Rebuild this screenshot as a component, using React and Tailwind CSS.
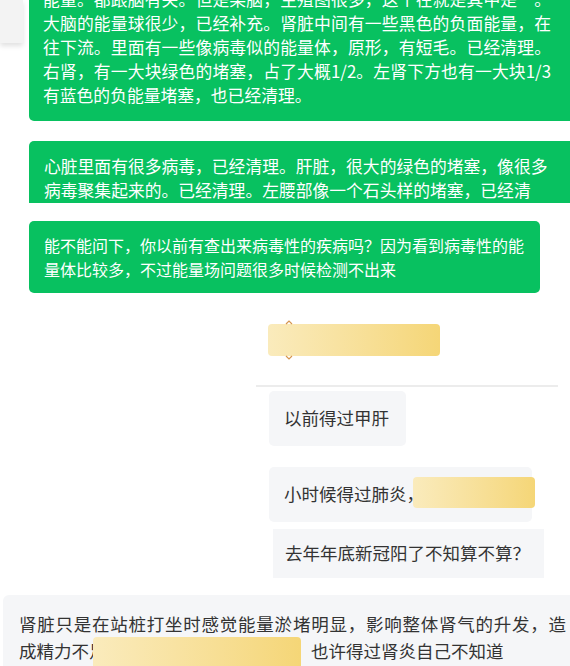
import React from "react";

const Redact = ({ className = "" }) => (
  <div
    className={`rounded-[4px] bg-gradient-to-r from-[#faebbc] to-[#f5d677] ${className}`}
  />
);

const Caret = ({ down = false }) => (
  <svg width="8" height="5" viewBox="0 0 8 5" className="block">
    {down ? (
      <path d="M1 1 L4 4 L7 1" fill="none" stroke="#d6954f" strokeWidth="1.2" />
    ) : (
      <path d="M1 4 L4 1 L7 4" fill="none" stroke="#d6954f" strokeWidth="1.2" />
    )}
  </svg>
);

export default function App() {
  const jLine = "w-[508px] whitespace-nowrap [text-align-last:justify]";

  return (
    <div
      className="relative w-[570px] h-[666px] overflow-hidden bg-white"
      style={{ fontFamily: '"Noto Sans CJK SC", "Noto Sans", sans-serif' }}
    >
      {/* first green message, scrolled off the top */}
      <div className="flex items-start">
        <div className="w-[23px] h-[43px] shrink-0 bg-[#f3f3f3] shadow-[0_3px_5px_rgba(0,0,0,0.12)]" />
        <div className="ml-[6px] w-[580px] h-[121px] shrink-0 rounded-bl-[5px] bg-[#08c160] pl-[14px] text-white text-[16.8px] leading-[24px] overflow-hidden">
          <div className="-mt-[13px]">
            <div className={jLine}>能量。都跟脑有关。但是某脑，生殖图很多，这个在就是其中是一。</div>
            <div className={jLine}>大脑的能量球很少，已经补充。肾脏中间有一些黑色的负面能量，在</div>
            <div className={jLine}>往下流。里面有一些像病毒似的能量体，原形，有短毛。已经清理。</div>
            <div className={jLine}>右肾，有一大块绿色的堵塞，占了大概1/2。左肾下方也有一大块1/3</div>
            <div className="whitespace-nowrap">有蓝色的负能量堵塞，也已经清理。</div>
          </div>
        </div>
      </div>

      {/* second green message, cut at the bottom */}
      <div className="mt-[20px] ml-[29px] w-[580px] h-[62px] overflow-hidden rounded-t-[5px] bg-[#08c160] pl-[15px] pt-[13px] text-white text-[16.8px] leading-[24px]">
        <div className="whitespace-nowrap">心脏里面有很多病毒，已经清理。肝脏，很大的绿色的堵塞，像很多</div>
        <div className="whitespace-nowrap">病毒聚集起来的。已经清理。左腰部像一个石头样的堵塞，已经清</div>
      </div>

      {/* question */}
      <div className="mt-[18px] ml-[29px] w-[511px] rounded-[5px] bg-[#08c160] px-[15px] py-[12px] text-white text-[16px] leading-[24px]">
        能不能问下，你以前有查出来病毒性的疾病吗？因为看到病毒性的能量体比较多，不过能量场问题很多时候检测不出来
      </div>

      {/* redacted name */}
      <div className="relative mt-[31px] ml-[268px] w-[172px]">
        <Redact className="h-[32px]" />
        <div className="absolute left-[17px] -top-[4px]">
          <Caret />
        </div>
        <div className="absolute left-[17px] -bottom-[4px]">
          <Caret down />
        </div>
      </div>

      <div className="mt-[29px] ml-[256px] w-[302px] h-[2px] bg-[#ececec]" />

      <div className="mt-[4px] ml-[269px] w-[137px] h-[55px] flex items-center rounded-[5px] bg-[#f5f6f8] pl-[15px] text-[17.5px] text-[#333]">
        以前得过甲肝
      </div>

      <div className="relative mt-[21px] ml-[269px] w-[263px] h-[55px] flex items-center rounded-[5px] bg-[#f5f6f8] pl-[15px] text-[17.5px] text-[#333]">
        小时候得过肺炎，
        <Redact className="absolute left-[144px] top-[10px] w-[122px] h-[31px]" />
      </div>

      <div className="mt-[7px] ml-[273px] w-[271px] h-[49px] flex items-center bg-[#f5f6f8] pl-[12px] text-[17.5px] text-[#333]">
        去年年底新冠阳了不知算不算？
      </div>

      {/* long grey reply */}
      <div className="relative mt-[17px] ml-[3px] w-[590px] h-[90px] rounded-tl-[6px] bg-[#f5f6f8] pl-[16px] pt-[15px] text-[17.5px] leading-[27px] text-[#333]">
        <div className="w-[547px] whitespace-nowrap [text-align-last:justify]">
          肾脏只是在站桩打坐时感觉能量淤堵明显，影响整体肾气的升发，造
        </div>
        <div className="flex whitespace-nowrap">
          <span>成精力不足，</span>
          <span className="w-[187px]" />
          <span>也许得过肾炎自己不知道</span>
        </div>
        <Redact className="absolute left-[90px] top-[42px] w-[208px] h-[40px]" />
      </div>
    </div>
  );
}
